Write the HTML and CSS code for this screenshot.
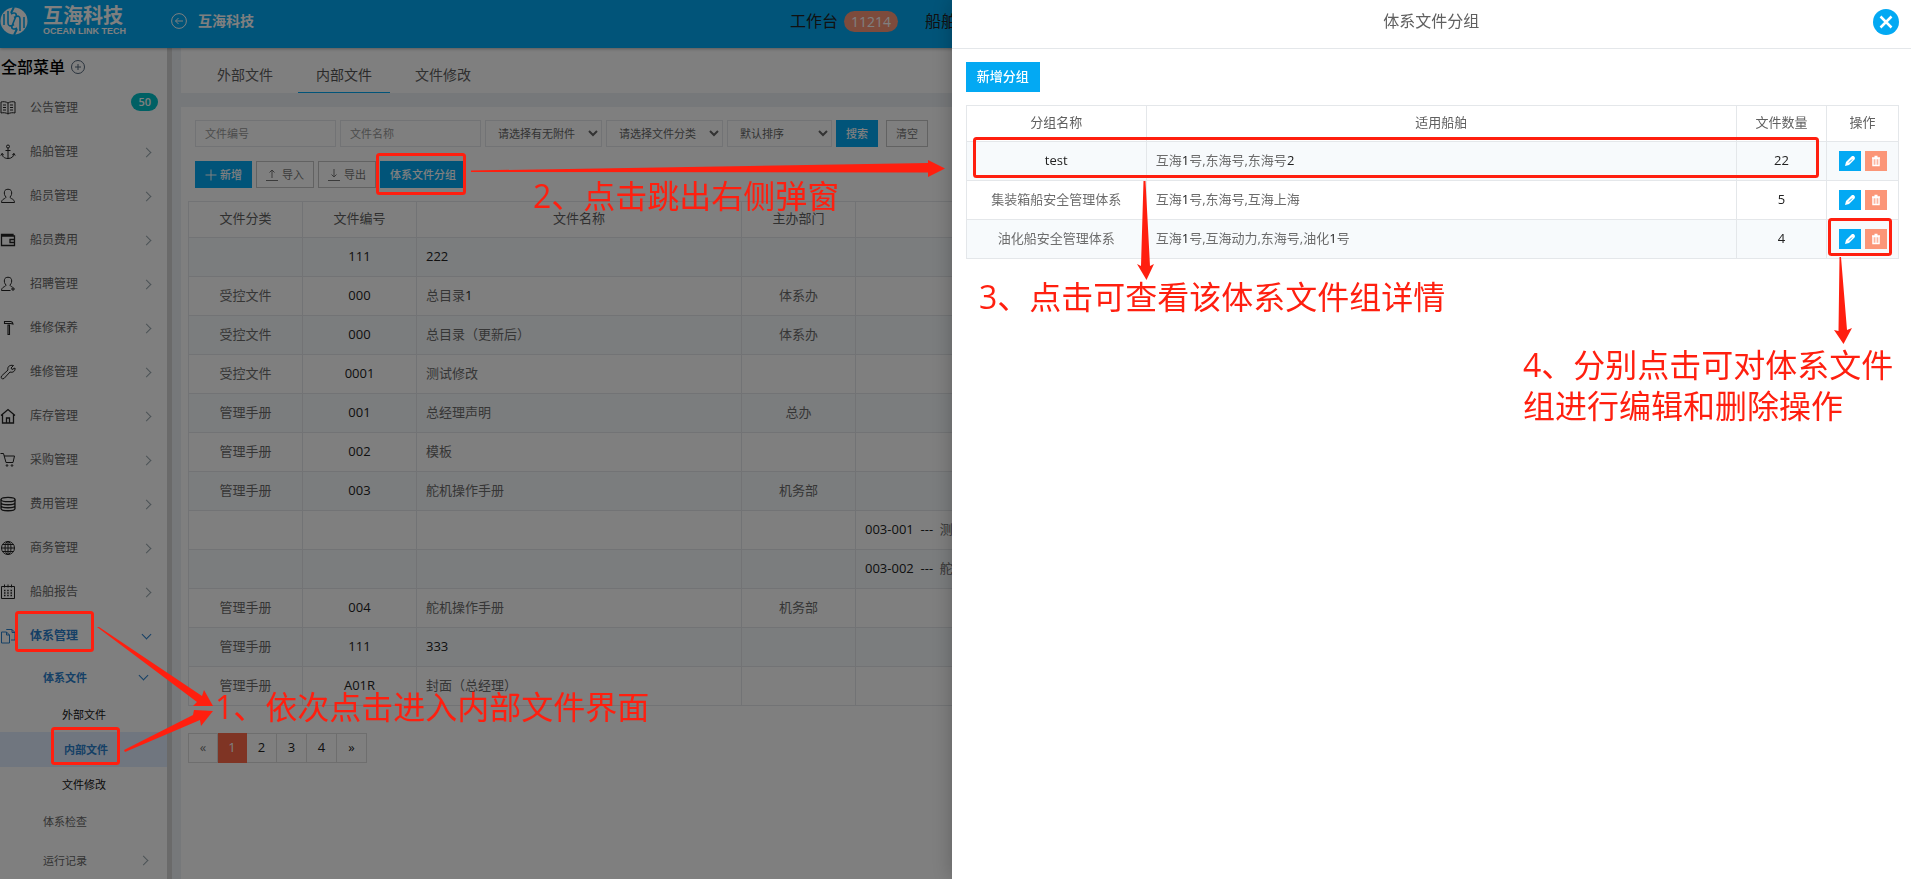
FILE: index.html
```html
<!DOCTYPE html>
<html lang="zh-CN">
<head>
<meta charset="utf-8">
<title>互海科技</title>
<link rel="stylesheet" href="styles.css">
</head>
<body>
<header class="topbar">
  <a class="logo" href="#">
    <svg class="logo-mark" viewBox="0 0 28 28"><circle cx="14" cy="14" r="13.5" fill="#fff"/><path d="M4 7v11M8 4v12M8 16c0 3 2 4 6 1.500M24 21V10M20 24V12M20 12c0-3-2-4-6-1.500M11 7c3-2 6-1 5 2l-4 10c-1 3 2 4 5 2" fill="none" stroke="#03a9f3" stroke-width="1.6"/><path d="M14 0l-3 6M14 28l3-6" stroke="#03a9f3" stroke-width="2"/></svg>
    <span class="logo-text"><span class="logo-cn">互海科技</span><span class="logo-en">OCEAN LINK TECH</span></span>
  </a>
  <a class="company" href="#">
    <svg viewBox="0 0 16 16" class="ico"><circle cx="8" cy="8" r="7.4"/><path d="M12 8H4.500M7.500 5l-3 3 3 3"/></svg>
    互海科技
  </a>
  <nav class="topnav">
    <a href="#">工作台 <span class="pill">11214</span></a>
    <a href="#">船舶动态</a>
  </nav>
</header>

<div class="shell">
  <aside class="sidebar">
    <h1 class="menu-title">全部菜单 <svg viewBox="0 0 16 16" class="ico ico-plus"><circle cx="8" cy="8" r="6.500"/><path d="M8 5v6M5 8h6"/></svg></h1>
    <ul class="menu">
      <li><a href="#"><svg viewBox="0 0 16 16" class="ico"><path d="M8 3C6 1.500 3 1.500 1 2v11c2-.500 5-.500 7 1 2-1.500 5-1.500 7-1V2c-2-.500-5-.500-7 1zM8 3v11M3 5h3M3 7.500h3M3 10h3M10 5h3M10 7.500h3M10 10h3"/></svg>公告管理<span class="count">50</span></a></li>
      <li><a href="#"><svg viewBox="0 0 16 16" class="ico"><circle cx="8" cy="2.500" r="1.500"/><path d="M8 4v10.500M5.500 6.500h5M2 9.500c0 3 2.500 5 6 5s6-2 6-5M.800 11.500l1.200-2 1.800 1.500M15.200 11.500l-1.200-2-1.800 1.500"/></svg>船舶管理<i class="chev"></i></a></li>
      <li><a href="#"><svg viewBox="0 0 16 16" class="ico"><path d="M6 9C4.500 7.500 4 5.500 4.500 3.500 5 .500 11 .500 11.500 3.500c.500 2 0 4-1.500 5.500 0 2 4.500 1.500 4.500 5.500h-13C1.500 10.500 6 11 6 9z"/></svg>船员管理<i class="chev"></i></a></li>
      <li><a href="#"><svg viewBox="0 0 16 16" class="ico ico-bold"><path d="M1.500 4v9.500h13V4zM1.500 4V2.500h11.500V4M10 7.500h4.500v3H10z"/></svg>船员费用<i class="chev"></i></a></li>
      <li><a href="#"><svg viewBox="0 0 16 16" class="ico"><path d="M10.500 14.500h-9C1.500 10.500 6 11 6 9 4.500 7.500 4 5.500 4.500 3.500 5 .500 11 .500 11.500 3.500c.500 2 0 4-1.500 5.500 0 1 1 1.500 2.500 2M13 11v4M11 13h4"/></svg>招聘管理<i class="chev"></i></a></li>
      <li><a href="#"><svg viewBox="0 0 16 16" class="ico ico-bold"><path d="M4.500 3.500v-2h6c1.500 0 2.200 1 2.500 2.500l-2.500-.500zM8 5h1.500v9.500H8z" stroke-width="1.100"/></svg>维修保养<i class="chev"></i></a></li>
      <li><a href="#"><svg viewBox="0 0 16 16" class="ico"><path d="M13.500 1.500L11 4l1 1.500 3-1.500c.500 3-2 5-5 4L4 14.500c-2 1-3.500-.500-2.500-2.500L8 6c-1-3 1.500-5.500 5.500-4.500z"/></svg>维修管理<i class="chev"></i></a></li>
      <li><a href="#"><svg viewBox="0 0 16 16" class="ico ico-bold"><path d="M1 7.500l7-6 7 6M2.500 6.500v8.500h11V6.500M6.500 15v-5h3v5"/></svg>库存管理<i class="chev"></i></a></li>
      <li><a href="#"><svg viewBox="0 0 16 16" class="ico"><path d="M.500 1.500h3l2.500 9h7l1.500-6.500H4"/><circle cx="7" cy="13.500" r=".8"/><circle cx="12" cy="13.500" r=".8"/></svg>采购管理<i class="chev"></i></a></li>
      <li><a href="#"><svg viewBox="0 0 16 16" class="ico ico-bold"><ellipse cx="8" cy="3.500" rx="7" ry="2.200"/><path d="M1 3.500v9c0 3 14 3 14 0v-9M1 6.500c0 3 14 3 14 0M1 9.500c0 3 14 3 14 0"/></svg>费用管理<i class="chev"></i></a></li>
      <li><a href="#"><svg viewBox="0 0 16 16" class="ico"><circle cx="8" cy="8" r="6.500"/><ellipse cx="8" cy="8" rx="3" ry="6.500"/><path d="M8 1.500v13M1.500 8h13M2.500 4.500h11M2.500 11.500h11"/></svg>商务管理<i class="chev"></i></a></li>
      <li><a href="#"><svg viewBox="0 0 16 16" class="ico"><path d="M1.500 2.500h13v12h-13zM4.500 .500v3M8 .500v3M11.500 .500v3"/><path d="M4 6.500h1.500M7.200 6.500h1.500M10.500 6.500H12M4 9h1.500M7.200 9h1.500M10.500 9H12M4 11.500h1.500M7.200 11.500h1.500M10.500 11.500H12" stroke-width="1.400"/></svg>船舶报告<i class="chev"></i></a></li>
      <li class="open"><a href="#"><svg viewBox="0 0 16 16" class="ico"><path d="M1.500 4h5l3 3v8h-8zM6.500 4v3h3M6.500 2V1.500H12l3 3V12h-4M12 1.500v3h3"/></svg>体系管理<i class="chev down"></i></a>
        <ul class="sub">
          <li class="open"><a href="#">体系文件<i class="chev down"></i></a>
            <ul class="leaf">
              <li><a href="#">外部文件</a></li>
              <li class="current"><a href="#">内部文件</a></li>
              <li><a href="#">文件修改</a></li>
            </ul>
          </li>
          <li><a href="#">体系检查</a></li>
          <li><a href="#">运行记录<i class="chev"></i></a></li>
        </ul>
      </li>
    </ul>
  </aside>

  <main class="main">
    <nav class="tabs">
      <a href="#">外部文件</a>
      <a href="#" class="active">内部文件</a>
      <a href="#">文件修改</a>
    </nav>
    <section class="panel">
      <form class="filters">
        <input class="field" type="text" placeholder="文件编号" aria-label="文件编号">
        <input class="field" type="text" placeholder="文件名称" aria-label="文件名称">
        <select class="field pick" aria-label="附件"><option>请选择有无附件</option></select>
        <select class="field pick" aria-label="文件分类"><option>请选择文件分类</option></select>
        <select class="field pick sort" aria-label="排序"><option>默认排序</option></select>
        <button class="btn primary" type="button">搜索</button>
        <button class="btn outline clear" type="button">清空</button>
      </form>
      <div class="actions">
        <button class="btn primary" type="button"><svg viewBox="0 0 12 12" class="ico"><path d="M6 .500v11M.500 6h11"/></svg>新增</button>
        <button class="btn outline" type="button"><svg viewBox="0 0 12 12" class="ico"><path d="M6 9V1M3.500 3.500L6 1l2.500 2.500M0 11.500h12"/></svg>导入</button>
        <button class="btn outline" type="button"><svg viewBox="0 0 12 12" class="ico"><path d="M6 0v8M3.500 5.500L6 8l2.500-2.500M0 11.500h12"/></svg>导出</button>
        <button class="btn primary" type="button">体系文件分组</button>
      </div>
      <table class="grid files">
        <colgroup><col class="c-code"><col class="c-code"><col class="c-name"><col class="c-code"><col></colgroup>
        <thead><tr><th>文件分类</th><th>文件编号</th><th>文件名称</th><th>主办部门</th><th>子文件</th></tr></thead>
        <tbody>
          <tr><td></td><td>111</td><td><b>222</b></td><td></td><td></td></tr>
          <tr><td>受控文件</td><td>000</td><td>总目录<b>1</b></td><td>体系办</td><td></td></tr>
          <tr><td>受控文件</td><td>000</td><td>总目录（更新后）</td><td>体系办</td><td></td></tr>
          <tr><td>受控文件</td><td>0001</td><td>测试修改</td><td></td><td></td></tr>
          <tr><td>管理手册</td><td>001</td><td>总经理声明</td><td>总办</td><td></td></tr>
          <tr><td>管理手册</td><td>002</td><td>模板</td><td></td><td></td></tr>
          <tr><td>管理手册</td><td>003</td><td>舵机操作手册</td><td>机务部</td><td></td></tr>
          <tr><td></td><td></td><td></td><td></td><td><b>003-001&nbsp; ---</b>&nbsp; 测试</td></tr>
          <tr><td></td><td></td><td></td><td></td><td><b>003-002&nbsp; ---</b>&nbsp; 舵机</td></tr>
          <tr><td>管理手册</td><td>004</td><td>舵机操作手册</td><td>机务部</td><td></td></tr>
          <tr><td>管理手册</td><td>111</td><td><b>333</b></td><td></td><td></td></tr>
          <tr><td>管理手册</td><td>A01R</td><td>封面（总经理）</td><td></td><td></td></tr>
        </tbody>
      </table>
      <nav class="pager">
        <a class="off" href="#">«</a><a class="on" href="#">1</a><a href="#">2</a><a href="#">3</a><a href="#">4</a><a href="#">»</a>
      </nav>
    </section>
  </main>
</div>

<div class="mask"></div>

<section class="drawer">
  <header class="drawer-head">
    <h2>体系文件分组</h2>
    <button class="close" type="button" aria-label="关闭"><svg viewBox="0 0 26 26"><path d="M7.500 7.500l11 11M18.500 7.500l-11 11"/></svg></button>
  </header>
  <div class="drawer-body">
    <button class="btn primary large" type="button">新增分组</button>
    <table class="grid groups">
      <colgroup><col class="c-group"><col><col class="c-num"><col class="c-op"></colgroup>
      <thead><tr><th>分组名称</th><th>适用船舶</th><th>文件数量</th><th>操作</th></tr></thead>
      <tbody>
        <tr><td><b>test</b></td><td>互海<b>1</b>号,东海号,东海号<b>2</b></td><td><b>22</b></td><td><div class="ops"><button class="op" type="button" aria-label="编辑"><svg viewBox="0 0 12 12"><path d="M1 11l1-4 5.500-5.500c2-1.500 4.500 1 3 3L5 10z" fill="#fff"/><path d="M5 7.500l3-3" stroke="#03a9f3"/></svg></button><button class="op del" type="button" aria-label="删除"><svg viewBox="0 0 12 12"><path d="M3 3.500h6V10.500H3zM2 3h8M4.500 1.500h3" stroke="#fff" fill="none" stroke-width="1.500"/><path d="M5.200 4v6M6.800 4v6" stroke="#fff"/></svg></button></div></td></tr>
        <tr><td>集装箱船安全管理体系</td><td>互海<b>1</b>号,东海号,互海上海</td><td><b>5</b></td><td><div class="ops"><button class="op" type="button" aria-label="编辑"><svg viewBox="0 0 12 12"><path d="M1 11l1-4 5.500-5.500c2-1.500 4.500 1 3 3L5 10z" fill="#fff"/><path d="M5 7.500l3-3" stroke="#03a9f3"/></svg></button><button class="op del" type="button" aria-label="删除"><svg viewBox="0 0 12 12"><path d="M3 3.500h6V10.500H3zM2 3h8M4.500 1.500h3" stroke="#fff" fill="none" stroke-width="1.500"/><path d="M5.200 4v6M6.800 4v6" stroke="#fff"/></svg></button></div></td></tr>
        <tr><td>油化船安全管理体系</td><td>互海<b>1</b>号,互海动力,东海号,油化<b>1</b>号</td><td><b>4</b></td><td><div class="ops"><button class="op" type="button" aria-label="编辑"><svg viewBox="0 0 12 12"><path d="M1 11l1-4 5.500-5.500c2-1.500 4.500 1 3 3L5 10z" fill="#fff"/><path d="M5 7.500l3-3" stroke="#03a9f3"/></svg></button><button class="op del" type="button" aria-label="删除"><svg viewBox="0 0 12 12"><path d="M3 3.500h6V10.500H3zM2 3h8M4.500 1.500h3" stroke="#fff" fill="none" stroke-width="1.500"/><path d="M5.200 4v6M6.800 4v6" stroke="#fff"/></svg></button></div></td></tr>
      </tbody>
    </table>
  </div>
</section>

<div class="notes">
  <svg class="marks" width="1911" height="879" viewBox="0 0 1911 879">
    <g fill="none" stroke="#ff1f0f" stroke-width="3">
      <rect x="16.500" y="612.500" width="76" height="38" rx="2"/>
      <rect x="52.500" y="728.500" width="66" height="35" rx="2"/>
      <rect x="377.500" y="154.500" width="87" height="39" rx="2"/>
      <rect x="974.500" y="138.500" width="843" height="38" rx="2"/>
      <rect x="1829.500" y="219.500" width="61" height="35" rx="2"/>
    </g>
    <g fill="#ff1f0f">
      <path d="M97 627L99 627 202 696 204 690 213 706 193 706 197 702z"/>
      <path d="M124 750L193 715 194 710 213 711 201 726 200 720 125 752z"/>
      <path d="M471 170.500L928 163 928 160 945 168.500 928 177 928 172.500 471 172z"/>
      <path d="M1143.500 181h2L1150 266l4-2-7.500 16-9.500-16 4 2z"/>
      <path d="M1839.500 257h1.500L1847 330l5-2-8.500 16-9.500-14 4.500 1z"/>
    </g>
  </svg>
  <p class="note n1">1、依次点击进入内部文件界面</p>
  <p class="note n2">2、点击跳出右侧弹窗</p>
  <p class="note n3">3、点击可查看该体系文件组详情</p>
  <p class="note n4">4、分别点击可对体系文件<br>组进行编辑和删除操作</p>
</div>
</body>
</html>
```

FILE: styles.css
```css
* { box-sizing: border-box; }
html, body { height: 100%; }
body {
  display: flex;
  flex-direction: column;
  margin: 0;
  overflow: hidden;
  background: #edf1f5;
  color: #313131;
  font: 13px/20px "Open Sans", "Noto Sans CJK SC", sans-serif;
}
a { color: inherit; text-decoration: none; }
ul { list-style: none; margin: 0; padding: 0; }
button, input, select { font: inherit; margin: 0; }
.ico { width: 16px; height: 16px; fill: none; stroke: currentColor; stroke-width: 1; flex: none; }
.ico-bold { stroke-width: 1.3; }

/* top bar */
.topbar {
  position: relative;
  z-index: 1;
  display: flex;
  flex: none;
  align-items: center;
  height: 48px;
  padding-bottom: 6px;
  background: #03a9f3;
  box-shadow: 0 1px 3px rgba(0, 0, 0, .3);
  color: #fff;
}
.logo { display: flex; align-items: center; gap: 15px; width: 171px; }
.logo-mark { width: 28px; height: 28px; }
.logo-text { display: flex; flex-direction: column; }
.logo-cn { font-size: 20px; line-height: 20px; font-weight: 700; }
.logo-en { font: 700 9px/10px "Liberation Sans", sans-serif; white-space: nowrap; }
.company { display: flex; align-items: center; gap: 11px; font-size: 14px; font-weight: 700; }
.topnav {
  display: flex;
  gap: 27px;
  flex: 1;
  padding-left: 536px;
  color: #222;
  font-size: 16px;
  line-height: 21px;
  white-space: nowrap;
}
.topnav a { display: flex; gap: 6px; }
.pill { padding: 0 7px; border-radius: 11px; background: #fb9678; color: #fff; font-size: 14px; line-height: 21px; }

/* side menu */
.shell { display: flex; flex: 1; min-height: 0; overflow: hidden; }
.sidebar { flex: none; width: 172px; background: #fff; border-right: 5px solid #d5d5d5; overflow: hidden; }
.menu-title {
  display: flex; align-items: center; gap: 5px;
  margin: 0; padding: 8px 0 8px 1px;
  color: #000; font-size: 16px; line-height: 22px; font-weight: 500;
}
.ico-plus { color: #54667a; }
.menu a { display: flex; align-items: center; color: #686868; }
.menu > li > a { gap: 14px; height: 44px; font-size: 12px; }
.menu > li > a > .ico { color: #222; }
.menu .open > a, .menu > .open > a > .ico { color: #2b80cc; font-weight: 700; }
.count {
  margin: 0 9px 12px auto; padding: 0 7px;
  border-radius: 9px; background: #01c0c8; color: #fff;
  font-size: 11px; line-height: 18px; font-weight: 600;
}
.chev {
  width: 7px; height: 7px; margin: 0 17px 0 auto;
  border: solid #98a6ad; border-width: 1px 1px 0 0;
  transform: rotate(45deg);
}
.chev.down { border-color: #2b80cc; transform: rotate(135deg); margin-bottom: 4px; }
.sub a { height: 39px; padding-left: 43px; font-size: 11px; }
.sub .chev { margin-right: 20px; }
.sub .leaf a { height: 35px; padding-left: 62px; color: #111; }
.sub .leaf .current a { background: #e0edff; color: #2b80cc; padding-left: 64px; font-weight: 700; }

/* content */
.main { display: flex; flex-direction: column; flex: 1; min-width: 0; padding-left: 9px; }
.tabs { display: flex; flex: none; gap: 7px; height: 45px; padding-left: 18px; margin-bottom: 14px; background: #fff; color: #606060; }
.tabs a { padding: 10px 18px 0; font-size: 14px; line-height: 34px; white-space: nowrap; }
.tabs .active { border-bottom: 1px solid #03a9f3; color: #555; }
.panel { flex: 1; padding: 13px 7px; background: #fff; }
.filters, .actions { display: flex; gap: 4px; padding: 0 7px; }
.actions { margin: 14px 0 13px; }
.field {
  width: 141px; height: 27px; padding: 0 9px;
  border: 1px solid #e4e7ea; border-radius: 0; background: #fff;
  color: #666; font-size: 11px;
}
.field::placeholder { color: #999; opacity: 1; }
.pick { width: 117px; padding: 0 2px 0 8px; }
.sort { width: 105px; }
.btn {
  display: flex; align-items: center; gap: 4px; height: 27px; padding: 0 9px;
  border: 1px solid transparent; border-radius: 0;
  font-size: 11px; line-height: 16px; white-space: nowrap;
}
.btn .ico { width: 12px; height: 12px; }
.primary { gap: 3px; background: #03a9f3; color: #fff; font-weight: 500; }
.outline { border-color: #c4c4c4; background: #fff; color: #777; }
.clear { margin-left: 4px; }
.grid { width: 100%; border-collapse: collapse; table-layout: fixed; }
.grid th, .grid td { border: 1px solid #e4e7ea; padding: 0 9px 3px; font-weight: 400; text-align: center; white-space: nowrap; overflow: hidden; }
.grid th { height: 36px; color: #606060; }
.grid td { height: 39px; color: #6c6c6c; }
.grid b, .files td:nth-child(2) { font-weight: 400; color: #222; }
.grid tbody tr:nth-child(odd) { background: #f7fafc; }
.files td:nth-child(3), .files td:nth-child(5), .groups td:nth-child(2) { text-align: left; }
.groups td:nth-child(4) { padding: 0; }
.c-code { width: 114px; }
.c-name { width: 325px; }
.pager { display: flex; margin-top: 27px; }
.pager a {
  width: 30px; height: 30px; padding-bottom: 1px;
  border: 1px solid #ddd; border-left-width: 0;
  line-height: 26px; text-align: center; color: #222;
}
.pager .off { border-left-width: 1px; color: #777; }
.pager .on { width: 29px; border-color: #ff6849; background: #ff6849; color: #fff; }

/* overlay and drawer */
.mask { position: fixed; inset: 0; z-index: 2; background: rgba(0, 0, 0, .5); }
.drawer {
  position: fixed; top: 0; right: 0; bottom: 0; z-index: 3;
  width: 50.2%;
  background: #fff; box-shadow: 0 0 20px rgba(0, 0, 0, .25);
}
.drawer-head { display: flex; align-items: center; justify-content: center; height: 49px; border-bottom: 1px solid #e4e7ea; }
.drawer-head h2 { margin: 0; padding-bottom: 6px; font-size: 16px; line-height: 22px; font-weight: 400; color: #606060; }
.close {
  position: absolute; top: 9px; right: 12px;
  width: 26px; height: 26px; padding: 0; border: 0; border-radius: 50%; background: #03a9f3;
}
.close svg { display: block; stroke: #fff; stroke-width: 2.5; }
.drawer-body { padding: 13px 12px 0 14px; }
.large { height: 30px; padding: 0 10px 2px; margin-bottom: 13px; font-size: 13px; }
.c-group { width: 180px; }
.c-num { width: 90px; }
.c-op { width: 72px; }
.ops { display: flex; justify-content: center; gap: 4px; }
.op { display: flex; align-items: center; justify-content: center; width: 22px; height: 20px; padding: 0; border: 0; background: #03a9f3; }
.op svg { width: 12px; height: 12px; fill: none; }
.del { background: #fb9678; }

/* walkthrough notes laid over the page */
.notes { position: absolute; inset: 0; z-index: 4; overflow: hidden; pointer-events: none; }
.marks { position: absolute; top: 0; left: 0; }
.note { position: absolute; margin: 0; color: #ff1f0f; font-size: 32px; line-height: 41px; white-space: nowrap; }
.n1 { left: 215px; top: 686px; }
.n2 { left: 533px; top: 175px; }
.n3 { left: 979px; top: 276px; }
.n4 { left: 1523px; top: 344px; }
```
